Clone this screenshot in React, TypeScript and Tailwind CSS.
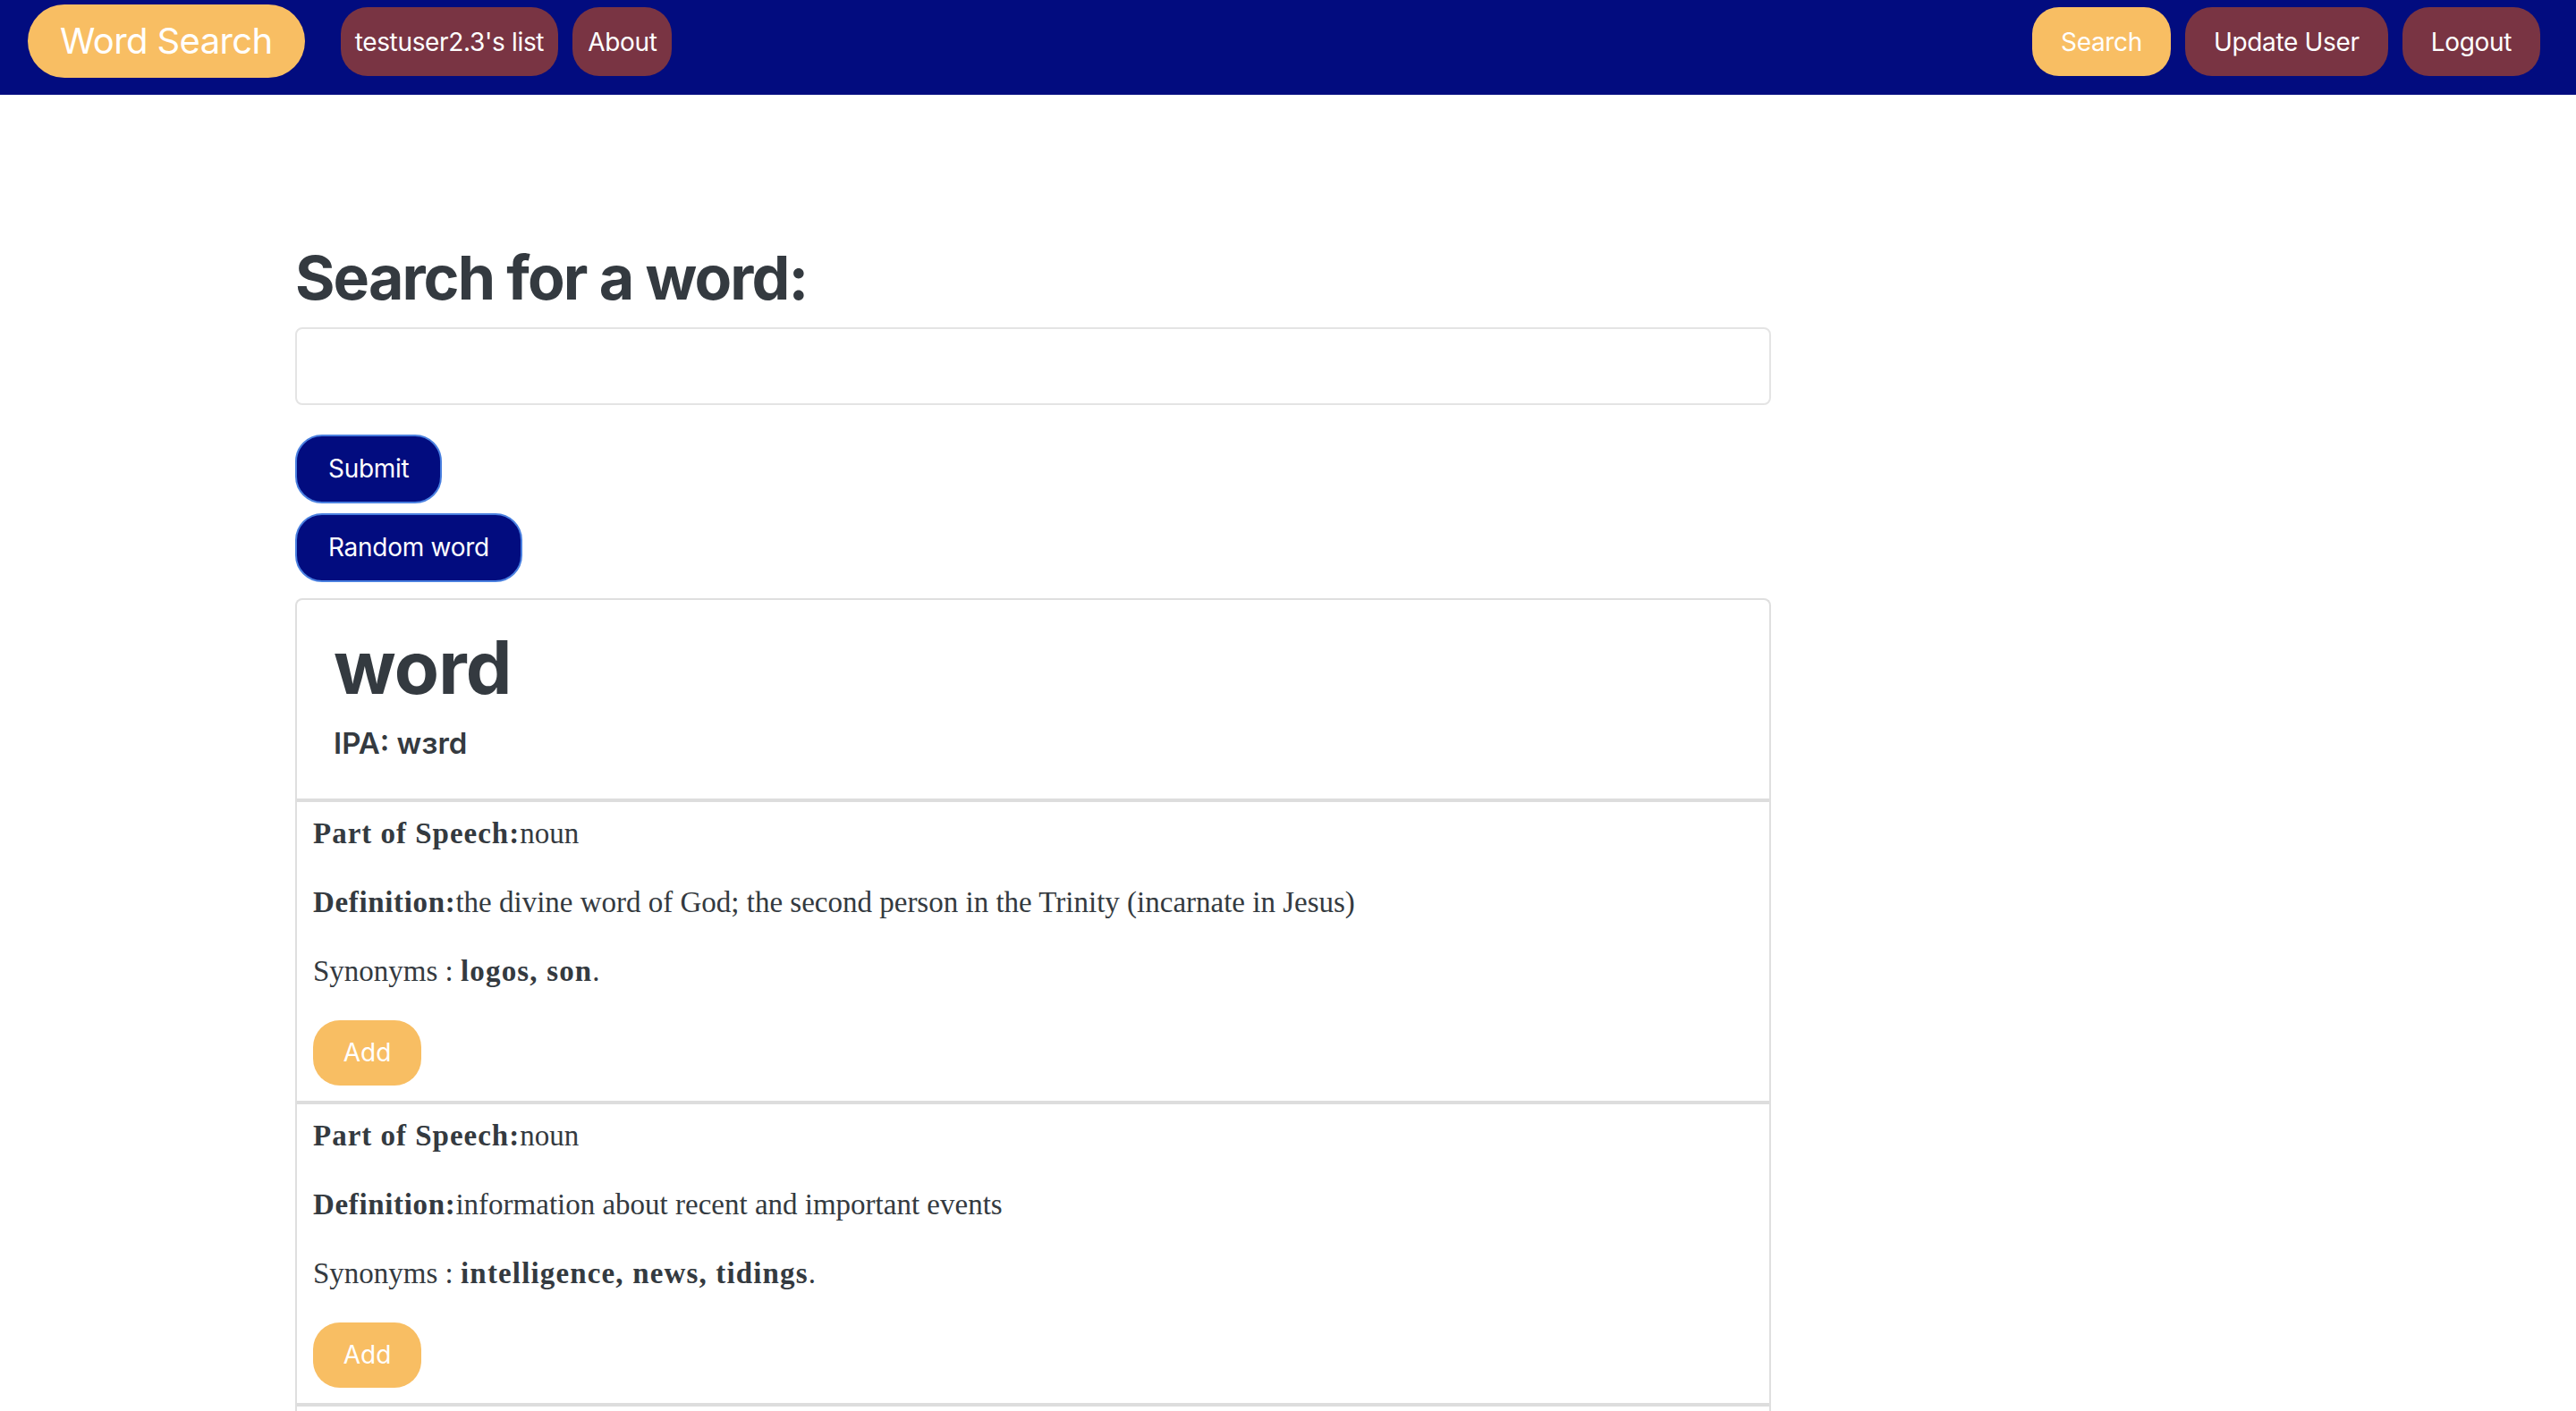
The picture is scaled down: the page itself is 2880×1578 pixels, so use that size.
import { useState } from "react";

const SANS = "font-['Inter','Liberation_Sans',sans-serif]";
const SERIF = "font-['Liberation_Serif','DejaVu_Serif',serif]";

type Meaning = {
  readonly partOfSpeech: string;
  readonly definition: string;
  readonly synonyms: string[];
};

const MEANINGS: Meaning[] = [
  {
    partOfSpeech: "noun",
    definition: "the divine word of God; the second person in the Trinity (incarnate in Jesus)",
    synonyms: ["logos", "son"],
  },
  {
    partOfSpeech: "noun",
    definition: "information about recent and important events",
    synonyms: ["intelligence", "news", "tidings"],
  },
];

const NAV_PILL =
  "flex h-[77px] items-center rounded-[30px] text-[28px] tracking-[-0.012em] text-white";

function NavBar() {
  return (
    <nav className={`flex h-[106px] items-start justify-between bg-[#020c7f] pl-[31px] pr-[40px] ${SANS}`}>
      <div className="flex items-start">
        <a
          className="mt-[5px] flex h-[82px] items-center rounded-full bg-[#f8be63] px-[36px] text-[40px] tracking-[-0.015em] text-white"
          href="#"
        >
          Word Search
        </a>
        <div className="ml-[40px] mt-[8px] flex gap-[16px]">
          <a className={`${NAV_PILL} bg-[#793443] px-[16px]`} href="#">
            testuser2.3's list
          </a>
          <a className={`${NAV_PILL} bg-[#793443] px-[17px]`} href="#">
            About
          </a>
        </div>
      </div>
      <div className="mt-[8px] flex gap-[16px]">
        <a className={`${NAV_PILL} bg-[#f8be63] px-[32px]`} href="#">
          Search
        </a>
        <a className={`${NAV_PILL} bg-[#793443] px-[32px]`} href="#">
          Update User
        </a>
        <a className={`${NAV_PILL} bg-[#793443] px-[32px]`} href="#">
          Logout
        </a>
      </div>
    </nav>
  );
}

function MeaningItem({ meaning }: { readonly meaning: Meaning }) {
  return (
    <li className={`border-t-4 border-[#dddddd] px-[18px] pb-[17px] pt-[11px] text-[33px] leading-[48px] text-[#343a40] ${SERIF}`}>
      <p className="mb-[29px]">
        <b className="tracking-[0.03em]">Part of Speech:</b>
        {meaning.partOfSpeech}
      </p>
      <p className="mb-[29px]">
        <b className="tracking-[0.02em]">Definition:</b>
        {meaning.definition}
      </p>
      <p className="mb-[31px]">
        Synonyms : <b className="tracking-[0.035em]">{meaning.synonyms.join(", ")}</b>.
      </p>
      <button
        className={`flex h-[73px] w-[121px] items-center justify-center rounded-[30px] bg-[#f8be63] text-[28px] text-white ${SANS}`}
        type="button"
      >
        Add
      </button>
    </li>
  );
}

export default function App() {
  const [query, setQuery] = useState("");

  return (
    <div className="min-h-screen bg-white">
      <NavBar />
      <main className={`pl-[330px] pt-[164px] ${SANS}`}>
        <div className="w-[1650px]">
          <h2 className="mb-[14px] text-[68px] font-bold leading-[1.2] tracking-[-0.028em] text-[#343a40]">
            Search for a word:
          </h2>
          <input
            className="block h-[87px] w-full rounded-[8px] border-2 border-[#e4e4e4] px-[24px] text-[32px] text-[#343a40] outline-none"
            onChange={(e) => {
              setQuery(e.target.value);
            }}
            type="text"
            value={query}
          />
          <div className="mt-[33px] flex flex-col items-start gap-[11px]">
            <button
              className="flex h-[77px] items-center rounded-[30px] border-2 border-[#4a80e0] bg-[#020c7f] px-[35px] text-[28px] tracking-[-0.01em] text-white"
              type="button"
            >
              Submit
            </button>
            <button
              className="flex h-[77px] items-center rounded-[30px] border-2 border-[#4a80e0] bg-[#020c7f] px-[35px] text-[28px] tracking-[-0.01em] text-white"
              type="button"
            >
              Random word
            </button>
          </div>
          <div className="mt-[18px] overflow-hidden rounded-t-[8px] border-2 border-b-0 border-[#dfdfdf]">
            <div className="px-[41px] pb-[41px] pt-[27px] text-[#343a40]">
              <h1 className="text-[82px] font-bold leading-[1.2] tracking-[-0.01em]">word</h1>
              <h5 className="mt-[16px] text-[33px] font-semibold leading-[1.2]">IPA: wɜrd</h5>
            </div>
            <ul>
              {MEANINGS.map((m, idx) => (
                <MeaningItem key={`${m.partOfSpeech}-${idx}`} meaning={m} />
              ))}
              <li className="h-[40px] border-t-4 border-[#dddddd]" />
            </ul>
          </div>
        </div>
      </main>
    </div>
  );
}
